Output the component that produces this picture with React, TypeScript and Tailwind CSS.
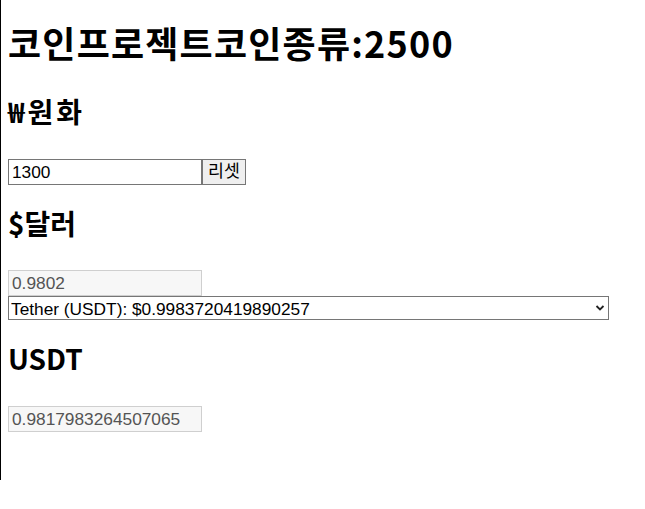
import { useState } from "react";

const heading = "font-['Noto_Sans_CJK_KR',sans-serif] font-bold text-black";
const field = "font-['Liberation_Sans','Noto_Sans_CJK_KR',sans-serif] text-[17.3px]";

export default function App() {
  const [won, setWon] = useState("1300");

  return (
    <div className="h-[480px] border-l border-black bg-white pl-[7px]">
      <h1 className={`${heading} pt-[20px] text-[36px] leading-[44px] tracking-[1.2px]`}>
        코인프로젝트코인종류:2500
      </h1>

      <h2 className={`${heading} mt-[30px] text-[28px] leading-[34px] tracking-[3px]`}>₩원화</h2>
      <div className="mt-[31px] flex">
        <input
          value={won}
          onChange={(e) => setWon(e.target.value)}
          className={`${field} h-[26px] w-[194px] border border-[#767676] bg-white px-[3px] text-black outline-none`}
        />
        <button
          onClick={() => setWon("1300")}
          className={`${field} h-[26px] w-[44px] border border-[#767676] bg-[#efefef] text-black leading-none`}
        >
          리셋
        </button>
      </div>

      <h2 className={`${heading} mt-[21px] text-[28px] leading-[34px]`}>$달러</h2>
      <input
        disabled
        value="0.9802"
        className={`${field} mt-[30px] block h-[26px] w-[194px] border border-[#cfcfcf] bg-[#f7f7f7] px-[3px] text-[#545454]`}
      />
      <div className="relative w-[601px]">
        <select
          defaultValue="usdt"
          className={`${field} block h-[24px] w-full appearance-none border border-[#767676] bg-white pl-[2px] text-black outline-none`}
        >
          <option value="usdt">Tether (USDT): $0.9983720419890257</option>
        </select>
        <svg
          className="pointer-events-none absolute right-[4px] top-[8px]"
          width="10"
          height="8"
          viewBox="0 0 10 8"
        >
          <path d="M1.5 2 L5 5.5 L8.5 2" fill="none" stroke="#222" strokeWidth="1.8" />
        </svg>
      </div>

      <h2 className={`${heading} mt-[21px] text-[28px] leading-[34px]`}>USDT</h2>
      <input
        disabled
        value="0.9817983264507065"
        className={`${field} mt-[31px] block h-[26px] w-[194px] border border-[#cfcfcf] bg-[#f7f7f7] px-[3px] text-[#545454]`}
      />
    </div>
  );
}
